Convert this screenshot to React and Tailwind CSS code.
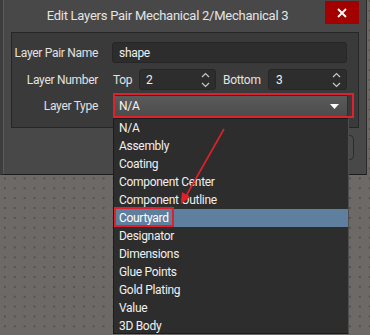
import React from 'react';

const items = [
  'N/A',
  'Assembly',
  'Coating',
  'Component Center',
  'Component Outline',
  'Courtyard',
  'Designator',
  'Dimensions',
  'Glue Points',
  'Gold Plating',
  'Value',
  '3D Body',
];

const Spinner = () => (
  <svg width="9" height="16" viewBox="0 0 9 16" className="shrink-0">
    <path d="M1 5 L4.5 1.5 L8 5" fill="none" stroke="#c8c8c8" strokeWidth="1.2" />
    <path d="M1 11 L4.5 14.5 L8 11" fill="none" stroke="#c8c8c8" strokeWidth="1.2" />
  </svg>
);

const App = () => {
  return (
    <div
      className="relative w-[370px] h-[335px] overflow-hidden whitespace-nowrap bg-[#6c6966] bg-[radial-gradient(circle,#55524f_0.8px,transparent_1.2px)] bg-[size:9.86px_9.86px] bg-[position:0px_-4px] text-[12px] tracking-[-0.3px] text-[#e2e2e2]"
      style={{ fontFamily: 'Roboto, "Open Sans", sans-serif' }}
    >
      {/* dialog */}
      <div className="w-[367px] h-[175px] bg-[#484848] border-l-[3px] border-l-[#3d3d3d] border-r border-r-[#2a2a2a] border-b border-b-[#1e1e1e] flex flex-col">
        <div className="h-[32px] flex items-start border-l border-l-[#5a5a5a]">
          <div className="flex-1 h-[31px] flex items-center justify-center pl-[6px] text-[13px] tracking-[-0.25px] text-[#e4e4e4]">
            Edit Layers Pair Mechanical 2/Mechanical 3
          </div>
          <div className="mt-[1px] mr-[7px] w-[34px] h-[23px] bg-[#a30000] flex items-center justify-center">
            <svg width="10" height="10" viewBox="0 0 10 10">
              <path d="M1 1 L9 9 M9 1 L1 9" stroke="#ffffff" strokeWidth="1.8" />
            </svg>
          </div>
        </div>
        <div className="flex-1 flex flex-col border-l border-l-[#5a5a5a]">
          <div className="ml-[7px] w-[348px] h-[96px] bg-[#3a3a3a] border border-[#262626] pt-[9px] flex flex-col gap-[5px]">
            <div className="flex items-center h-[21px]">
              <div className="w-[86px] text-right">Layer Pair Name</div>
              <div className="ml-[14px] w-[235px] h-[21px] rounded-[3px] bg-[#2d2d2d] border border-[#262626] flex items-center pl-[6px] text-[#f0f0f0]">
                shape
              </div>
            </div>
            <div className="flex items-center h-[21px] mt-[1px]">
              <div className="w-[86px] text-right">Layer Number</div>
              <div className="ml-[15px] w-[26px]">Top</div>
              <div className="w-[77px] h-[21px] rounded-[3px] bg-[#2d2d2d] border border-[#262626] flex items-center justify-between pl-[6px] pr-[5px] text-[#f0f0f0]">
                2
                <Spinner />
              </div>
              <div className="ml-[7px] w-[45px]">Bottom</div>
              <div className="w-[79px] h-[21px] rounded-[3px] bg-[#2d2d2d] border border-[#262626] flex items-center justify-between pl-[7px] pr-[5px] text-[#f0f0f0]">
                3
                <Spinner />
              </div>
            </div>
            <div className="flex items-center h-[22px]">
              <div className="w-[86px] text-right">Layer Type</div>
              <div className="ml-[15px] w-[235px] h-[22px] rounded-[2px] bg-[linear-gradient(#5a5a5a,#4c4c4c)] border border-[#2e2e2e] flex items-center justify-between pl-[5px] pr-[8px] text-[#f4f4f4]">
                N/A
                <svg width="9" height="5" viewBox="0 0 9 5">
                  <path d="M0 0 L9 0 L4.5 5 Z" fill="#ffffff" />
                </svg>
              </div>
            </div>
          </div>
          <div className="flex justify-end pr-[12px] pt-[7px]">
            <div className="w-[70px] h-[25px] rounded-[4px] bg-[#4a4a4a] border border-[#2c2c2c]" />
          </div>
        </div>
      </div>

      {/* red highlight around select */}
      <div className="absolute left-[113px] top-[93px] w-[241px] h-[25px] border-2 border-[#e0202a]" />

      {/* dropdown list */}
      <div className="absolute left-[113px] top-[118px] w-[236px] h-[216px] bg-[#2d2d2d] border border-[#1c1c1c] border-r-[#4e4e4e] flex flex-col">
        {items.map((it) => (
          <div
            key={it}
            className={
              it === 'Courtyard'
                ? 'h-[18px] shrink-0 flex items-center pl-[5px] bg-[#5f7f9f] text-white'
                : 'h-[18px] shrink-0 flex items-center pl-[5px] text-[#f0f0f0]'
            }
          >
            {it}
          </div>
        ))}
      </div>

      {/* red box around Courtyard */}
      <div className="absolute left-[114px] top-[207px] w-[60px] h-[20px] border-2 border-[#e0202a]" />

      {/* red arrow */}
      <svg className="absolute left-0 top-0" width="370" height="335" viewBox="0 0 370 335">
        <line x1="224" y1="129" x2="186" y2="196" stroke="#e0202a" strokeWidth="1.6" />
        <path d="M181 204 L182 192 L190 197 Z" fill="#e0202a" />
      </svg>
    </div>
  );
};

export default App;
